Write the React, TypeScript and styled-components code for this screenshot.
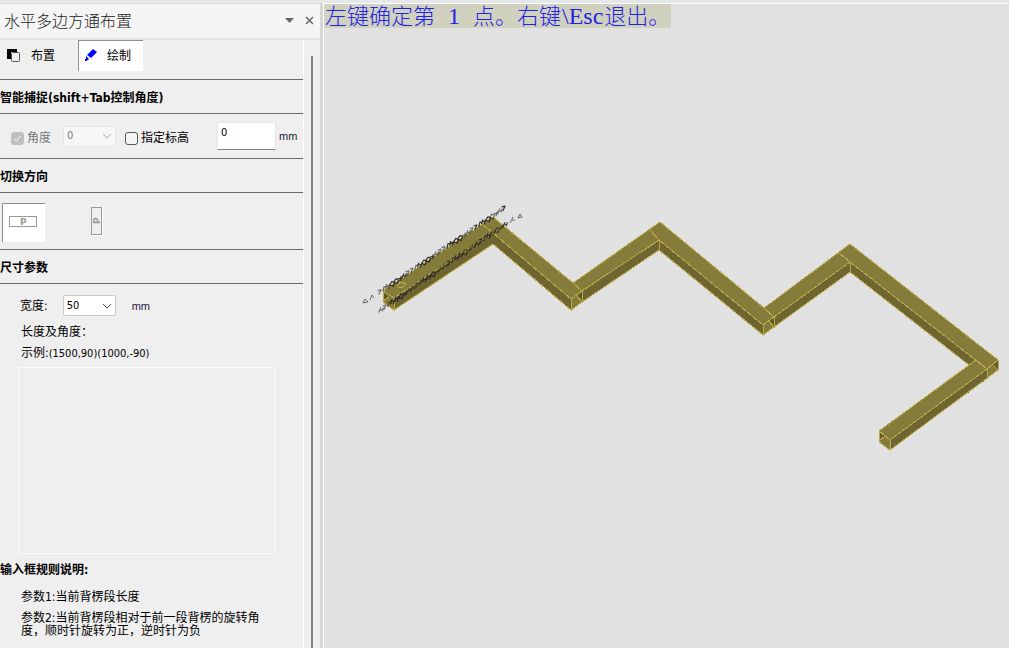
import React from 'react';
import styled, { createGlobalStyle, css } from 'styled-components';

const Global = createGlobalStyle`
  * { box-sizing: border-box; }
  html, body, #root { height: 100%; margin: 0; }
  body {
    background: #efefef;
    color: #000;
    font: 12px/16px 'DejaVu Sans Condensed', 'Noto Sans CJK SC', sans-serif;
  }
  button, input, select, textarea { font: inherit; color: inherit; margin: 0; }
  fieldset { border: 0; margin: 0; padding: 0; }
`;

const Window = styled.div`
  display: flex;
  min-height: 100vh;
  border-top: 3px solid #e4e8e8;
`;

const Panel = styled.aside`
  display: flex;
  flex-direction: column;
  flex: 0 0 320px;
  border-top: 1px solid #dcdcdc;
`;

const TitleBar = styled.header`
  display: flex;
  align-items: center;
  height: 36px;
  padding: 0 1px 2px 4px;
  background: #f5f5f5;
  border-bottom: 2px solid #e4e4e4;
`;

const Title = styled.h1`
  flex: 1;
  margin: 0;
  font: 300 16px/24px 'Noto Sans CJK SC', sans-serif;
  color: #222;
`;

const TitleButton = styled.button`
  display: flex;
  align-items: center;
  justify-content: center;
  width: 20px;
  height: 20px;
  padding: 0;
  border: 0;
  background: none;
`;

const PanelBody = styled.div`
  display: flex;
  flex: 1;
`;

const Content = styled.div`
  flex: 1;
  border-right: 1px solid #fff;
`;

const ScrollTrack = styled.div`
  width: 16px;
  padding: 16px 7px 0;
  display: flex;
`;

const ScrollThumb = styled.div`
  flex: 1;
  background: #858585;
`;

const Tabs = styled.div`
  display: flex;
  gap: 8px;
  height: 39px;
`;

const Tab = styled.button<{ $active?: boolean }>`
  display: flex;
  align-items: center;
  gap: 10px;
  width: ${(p) => (p.$active ? 65 : 70)}px;
  height: 31px;
  padding: 0 6px;
  border: solid transparent;
  border-width: 1px 0 0 1px;
  background: none;
  ${(p) => p.$active && css`
    border-color: #8e8e8e;
    background: #fff;
  `}
`;

const SectionTitle = styled.h2<{ $plain?: boolean }>`
  margin: 0;
  font-size: 12px;
  font-weight: bold;
  line-height: 16px;
  padding: ${(p) => (p.$plain ? '8px 0' : '10px 0 7px')};
  border: solid #6a6a6a;
  border-width: ${(p) => (p.$plain ? 0 : '1px 0')};
`;

const SnapRow = styled.fieldset`
  display: flex;
  align-items: center;
  height: 44px;
  padding: 0 0 0 11px;
`;

const Check = styled.label<{ $disabled?: boolean }>`
  display: flex;
  align-items: center;
  gap: 3px;
  padding-top: 4px;
  color: ${(p) => (p.$disabled ? '#777' : '#000')};
`;

const CheckBox = styled.input`
  appearance: none;
  width: 13px;
  height: 13px;
  border: 1px solid #555;
  border-radius: 3px;
  background: #f5f5f5;
  &:disabled {
    border-color: #bfbfbf;
    background: #bfbfbf
      url("data:image/svg+xml,%3Csvg xmlns='http://www.w3.org/2000/svg' viewBox='0 0 11 11'%3E%3Cpath d='M2 5.5l2.3 2.4L9 3' fill='none' stroke='%23fff'/%3E%3C/svg%3E");
  }
`;

const SelectWrap = styled.span<{ $disabled?: boolean }>`
  display: grid;
  align-items: center;
  width: 53px;
  height: 21px;
  border: 1px solid ${(p) => (p.$disabled ? '#e6e6e6' : '#c8c8c8')};
  border-radius: 2px;
  background: ${(p) => (p.$disabled ? '#f7f7f7' : '#fff')};
  color: ${(p) => (p.$disabled ? '#777' : '#000')};
  > * { grid-area: 1 / 1; }
  > svg { justify-self: end; margin-right: 3px; pointer-events: none; }
`;

const Select = styled.select`
  appearance: none;
  width: 100%;
  height: 100%;
  padding: 0 3px;
  border: 0;
  background: none;
  font-size: 11px;
  &:disabled { opacity: 1; }
`;

const NumberBox = styled.input`
  width: 59px;
  height: 28px;
  padding: 0 3px 8px;
  border: 1px solid #e6e6e6;
  border-bottom-color: #858585;
  background: #fff;
  font-size: 11px;
`;

const Unit = styled.span`
  font: 11px/16px 'Liberation Sans', sans-serif;
  color: #1a1a40;
`;

const Gap = styled.span<{ $w: number }>`
  flex: 0 0 ${(p) => p.$w}px;
`;

const Directions = styled.div`
  display: flex;
  align-items: center;
  gap: 31px;
  height: 56px;
  padding: 4px 2px 2px;
`;

const DirectionButton = styled.button<{ $active?: boolean }>`
  display: flex;
  align-items: center;
  justify-content: center;
  width: 43px;
  height: 39px;
  padding: 0 2px 2px 0;
  border: solid ${(p) => (p.$active ? '#8e8e8e' : 'transparent')};
  border-width: 1px 0 0 1px;
  background: ${(p) => (p.$active ? '#fff' : 'none')};
`;

const SizeForm = styled.div`
  padding: 11px 28px 0 18px;
`;

const WidthRow = styled.div`
  display: flex;
  align-items: center;
  padding: 0 0 6px 2px;
`;

const Line = styled.label`
  display: block;
  padding-left: 3px;
  line-height: 21px;
`;

const Latin = styled.span`
  font-size: 11px;
`;

const Params = styled.textarea`
  display: block;
  width: 100%;
  height: 187px;
  margin-top: 3px;
  border: 1px solid #fafafa;
  background: none;
  resize: none;
`;

const Rules = styled.div`
  padding: 5px 40px 0 21px;
  line-height: 13px;
  p { margin: 0 0 8px; }
  p:last-child { margin: 0; }
`;

const Viewport = styled.main`
  display: flex;
  flex-direction: column;
  align-items: flex-start;
  flex: 1;
  min-width: 0;
  margin-left: 3px;
  border: solid #fff;
  border-width: 1px 0 0 1px;
  box-shadow: -3px 0 0 #d6d6d6;
  background: #e1e1e1;
`;

const Prompt = styled.p`
  margin: 0;
  padding: 0 1px 4px;
  background: #d1d1bf;
  color: #2222e6;
  font: 300 22px/20px 'Noto Sans CJK SC', sans-serif;
  white-space: pre;
`;

const Serif = styled.span<{ $spaced?: boolean }>`
  font: 24px/16px 'Liberation Serif', serif;
  padding: 0 ${(p) => (p.$spaced ? 7 : 1)}px;
`;

const Scene = styled.svg`
  width: 100%;
  flex: 1;
`;

const Chevron = ({ color }: { color: string }) => (
  <svg width="10" height="6" viewBox="0 0 10 6" fill="none" stroke={color}>
    <path d="M1 1l4 4 4-4" />
  </svg>
);

const Plate = () => (
  <>
    <rect x="0.5" y="0.5" width="27" height="10" fill="none" stroke="#999" />
    <text x="11" y="9" fill="#999" fontFamily="DejaVu Sans" fontWeight="bold" fontSize="9">P</text>
  </>
);

const top = '#857b3a';
const side = '#6e6530';
const edge = '#b8aa4a';

const faces: [string, string][] = [
  [side, '394,298 493,233 493,244 394,310'],
  [top, '383,291 493,217 493,233 394,298'],
  [side, '493,233 571,299 571,310 493,244'],
  [top, '482,224 493,217 573,283 582,291 571,299 493,233'],
  [top, '571,299 582,291 582,302 571,310'],
  [side, '582,291 659,240 659,250 582,302'],
  [top, '573,283 660,222 659,240 582,291'],
  [side, '659,240 763,325 763,335 659,250'],
  [top, '650,230 660,222 764,308 774,317 763,325 659,240'],
  [top, '763,325 774,317 774,327 763,335'],
  [side, '774,317 850,262 850,272 774,327'],
  [top, '764,308 850,244 850,262 774,317'],
  [side, '850,262 976,360 969,365 850,272'],
  [top, '839,253 850,244 998,360 987,369 850,262'],
  [top, '987,369 998,360 998,370 987,379'],
  [side, '890,440 987,369 987,379 890,450'],
  [top, '879,431 976,360 987,369 890,440'],
  [top, '879,431 890,440 890,450 879,442'],
  [top, '383,291 394,298 394,310 383,302'],
];

const inner = ['577,296 582,292 582,301', '769,321 774,317 774,327', '993,365 998,361 998,370', '879,432 885,436 879,441', '383,292 389,297 383,301'];

const edges = [
  'M383 291L493 217L573 283L660 222L764 308L850 244L998 360V370L890 450L879 442V431L976 360',
  'M383 291V302L394 310V298ZM394 298L493 233L571 299V310L493 244L394 310M482 224L493 233',
  'M571 299L582 291L659 240L763 325V335L659 250L582 302L571 310M659 240V250M650 230L659 240',
  'M573 283L582 291V302L577 296M763 325L774 317L850 262L987 369L998 360M850 262V272L969 365',
  'M839 253L850 262M763 335L774 327L850 272M764 308L774 317V327L769 321M976 360L987 369V379',
  'M987 369L890 440V450M890 440L879 431M998 370L993 365M879 441L885 436M383 301L389 297',
  'M397 285L401 282L406 284L402 288L398 287Z',
].join('');

/* Dimension marks running beside the first beam, too small to be read. */
const marks = [
  'M-1 2L1-2M-2-1L1-2',
  'M-2 2L0-2M1 1L2-2M-1 0H2',
  'M0 2L1-2M-2 0H2',
  'M-2 1L0-2L2-1L1 2Z',
  'M-2 2L-1-2M0 2L2-2M-2 0L2-1',
  'M-1 2L0-2L2-2',
];

const rows = [
  { x: 380, y: 292, dx: 4, dy: -2.7, count: 32 },
  { x: 381, y: 310, dx: 4, dy: -2.75, count: 32 },
];

export default function App() {
  return (
    <Window>
      <Global />
      <Panel>
        <TitleBar>
          <Title>水平多边方通布置</Title>
          <TitleButton aria-label="菜单">
            <svg width="9" height="5"><path d="M0 0h9L4.500 5z" fill="#666" /></svg>
          </TitleButton>
          <TitleButton aria-label="关闭">
            <svg width="9" height="9" stroke="#666" strokeWidth="1.500"><path d="M1 1l7 7M8 1l-7 7" /></svg>
          </TitleButton>
        </TitleBar>
        <PanelBody>
          <Content>
            <Tabs>
              <Tab>
                <svg width="14" height="14"><path d="M0 0h10v3H4v7H0z" /><rect x="4.500" y="3.500" width="8" height="9" rx="1" fill="#efefef" stroke="#555" /></svg>
                布置
              </Tab>
              <Tab $active>
                <svg width="12" height="14" fill="#00f"><path d="M8 0l4 3-6 6-4-3zM1 7l3 3-1 1H1zM0 10h2v2H0z" /></svg>
                绘制
              </Tab>
            </Tabs>
            <SectionTitle>智能捕捉(shift+Tab控制角度)</SectionTitle>
            <SnapRow>
              <Check $disabled><CheckBox type="checkbox" defaultChecked disabled />角度</Check>
              <Gap $w={12} />
              <SelectWrap $disabled>
                <Select disabled aria-label="角度"><option>0</option></Select>
                <Chevron color="#aaa" />
              </SelectWrap>
              <Gap $w={9} />
              <Check><CheckBox type="checkbox" />指定标高</Check>
              <Gap $w={28} />
              <NumberBox defaultValue="0" aria-label="标高" />
              <Gap $w={3} />
              <Unit>mm</Unit>
            </SnapRow>
            <SectionTitle>切换方向</SectionTitle>
            <Directions>
              <DirectionButton $active aria-label="水平">
                <svg width="28" height="11"><Plate /></svg>
              </DirectionButton>
              <DirectionButton aria-label="垂直">
                <svg width="12" height="29">
                  <path d="M11.500 0V28.500H0" fill="none" stroke="#fff" />
                  <g transform="translate(0 28) rotate(-90)"><Plate /></g>
                </svg>
              </DirectionButton>
            </Directions>
            <SectionTitle>尺寸参数</SectionTitle>
            <SizeForm>
              <WidthRow>
                <label htmlFor="width">宽度:</label>
                <Gap $w={15} />
                <SelectWrap><Select id="width"><option>50</option></Select><Chevron color="#555" /></SelectWrap>
                <Gap $w={16} />
                <Unit>mm</Unit>
              </WidthRow>
              <Line htmlFor="params">长度及角度：</Line>
              <Line as="div">示例:<Latin>(1500,90)(1000,-90)</Latin></Line>
              <Params id="params" />
            </SizeForm>
            <SectionTitle $plain>输入框规则说明:</SectionTitle>
            <Rules>
              <p>参数1:当前背楞段长度</p>
              <p>参数2:当前背楞段相对于前一段背楞的旋转角度，顺时针旋转为正，逆时针为负</p>
            </Rules>
          </Content>
          <ScrollTrack><ScrollThumb /></ScrollTrack>
        </PanelBody>
      </Panel>
      <Viewport>
        <Prompt>左键确定第<Serif $spaced> 1 </Serif>点。右键<Serif>\Esc</Serif>退出。</Prompt>
        <Scene viewBox="324 28 685 620" preserveAspectRatio="xMinYMin meet">
          <g shapeRendering="crispEdges">
            {faces.map(([fill, points]) => <polygon key={points} fill={fill} points={points} />)}
            {inner.map((points) => <polygon key={points} fill="#645b28" points={points} />)}
            <path d={edges} fill="none" stroke={edge} />
          </g>
          <g fill="none" stroke="#222">
            {rows.map((row, r) =>
              Array.from({ length: row.count }, (_, i) => (
                <path
                  key={`${r}-${i}`}
                  d={marks[(i * 5 + (i >> 2) + r) % marks.length]}
                  opacity={i % 7 < 3 ? 0.6 : 0.9}
                  transform={`translate(${row.x + row.dx * i} ${row.y + row.dy * i}) scale(1.2)`}
                />
              )),
            )}
            <path d="M363 303L365 299L368 302ZM370 300L372 295L374 298M510 223L513 217M512 220H515M518 218L520 214L522 217Z" opacity="0.6" />
          </g>
        </Scene>
      </Viewport>
    </Window>
  );
}
